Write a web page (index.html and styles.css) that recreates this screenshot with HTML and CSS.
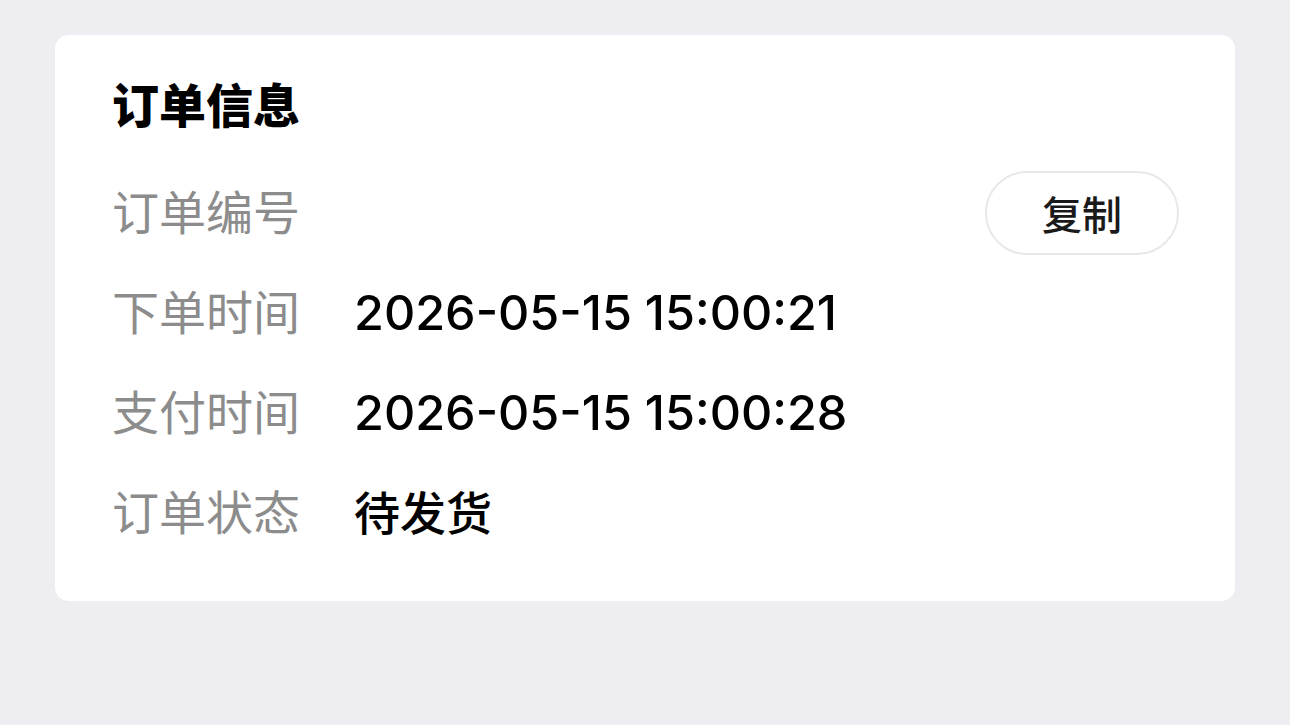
FILE: index.html
```html
<!DOCTYPE html>
<html lang="zh-CN">
<head>
<meta charset="utf-8">
<link rel="stylesheet" href="styles.css">
</head>
<body>
<div class="card">
  <div class="title">订单信息</div>
  <div class="row">
    <div class="label">订单编号</div>
    <div class="value"></div>
    <button class="copy">复制</button>
  </div>
  <div class="row">
    <div class="label">下单时间</div>
    <div class="value num">2026-05-15 15:00:21</div>
  </div>
  <div class="row">
    <div class="label">支付时间</div>
    <div class="value num">2026-05-15 15:00:28</div>
  </div>
  <div class="row">
    <div class="label">订单状态</div>
    <div class="value">待发货</div>
  </div>
</div>
</body>
</html>
```

FILE: styles.css
```css
html, body {
  margin: 0;
  padding: 0;
  background: #eeeef2;
  font-family: "Noto Sans CJK SC", "Noto Sans", sans-serif;
}
body {
  padding: 35px 55px;
  width: 1290px;
  height: 725px;
  box-sizing: border-box;
}
.card {
  background: #ffffff;
  border-radius: 14px;
  padding: 38px 56px 38px 57px;
  display: flex;
  flex-direction: column;
}
.title {
  font-size: 47px;
  line-height: 60px;
  font-weight: 900;
  color: #000;
  margin-bottom: 30px;
}
.row {
  display: flex;
  align-items: center;
  height: 100px;
}
.label {
  width: 242px;
  flex: none;
  font-size: 47px;
  color: #8c8c8c;
  line-height: 60px;
  margin-top: -6px;
}
.value {
  flex: 1;
  font-size: 46px;
  font-weight: 500;
  color: #000;
  line-height: 60px;
  margin-top: -6px;
}
.num {
  font-family: "Inter", "Noto Sans", sans-serif;
  font-weight: 500;
  font-size: 48.5px;
  margin-top: 0;
}
.copy {
  width: 194px;
  height: 84px;
  border: 2px solid #e8e8e8;
  border-radius: 42px;
  background: #fff;
  font-family: "Noto Sans CJK SC", sans-serif;
  font-size: 40px;
  font-weight: 500;
  color: #1a1a1a;
  padding: 0;
}
```
